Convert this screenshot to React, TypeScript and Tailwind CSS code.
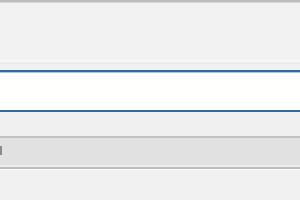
export default function App() {
  return (
    <div className="w-[300px] h-[200px] overflow-hidden bg-[#f1f1f1] flex flex-col">
      {/* top frame edge */}
      <div className="h-[3px] bg-[#bdbdbd] border-b border-[#d8d8d8]" />

      {/* upper panel */}
      <div className="h-[58px] bg-[#f2f2f2] border-b border-[#fafafa]" />
      <div className="h-[3px] border-b border-[#e8e8e8]" />

      {/* focused text input */}
      <div className="mt-[6px] h-[42px] border-y-[2px] border-y-[#36699a] bg-[#fffffd] shadow-[inset_0_1px_0_#9ccbee,0_1px_0_#b3d5ee]" />

      {/* gap */}
      <div className="h-[24px] bg-[#f0f0f0]" />

      {/* grey button bar */}
      <div className="h-[33px] bg-[#e1e1e1] border-t-[2px] border-t-[#c2c2c2] border-b-[2px] border-b-[#bdbdbd] shadow-[inset_0_-2px_0_#ececec] flex items-center">
        <div className="w-[2px] h-[9px] bg-[#8a8a8a] mb-[4px]" />
      </div>

      <div className="flex-1 bg-[#f1f1f1] border-t border-[#fafafa]" />
    </div>
  );
}
